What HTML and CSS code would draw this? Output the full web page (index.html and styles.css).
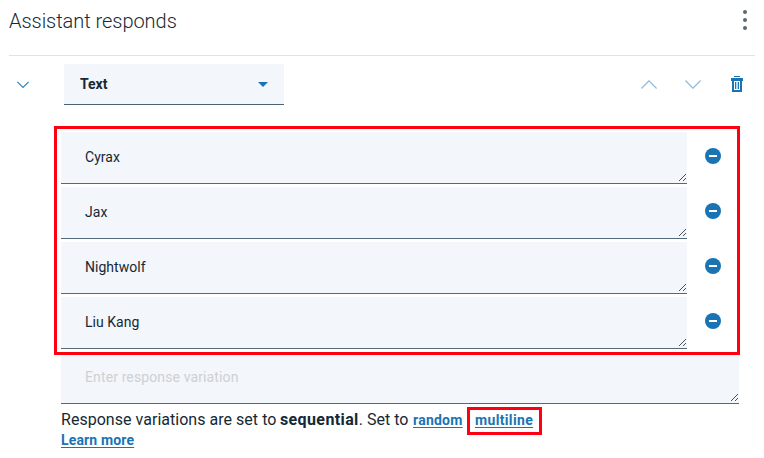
FILE: index.html
```html
<!DOCTYPE html>
<html lang="en">
<head>
<meta charset="utf-8">
<title>Assistant responds</title>
<link rel="stylesheet" href="styles.css">
</head>
<body>
<svg class="defs" width="0" height="0">
  <symbol id="grip" viewBox="0 0 8 8"><path d="M0 7h1v1H0zM1 6h1v1H1zM2 5h1v1H2zM3 4h1v1H3zM4 3h1v1H4zM5 2h1v1H5zM6 1h1v1H6zM4 7h1v1H4zM5 6h1v1H5zM6 5h1v1H6z" fill="#4b5055"/></symbol>
  <symbol id="minus" viewBox="0 0 16 16"><circle cx="8" cy="8" r="8" fill="#1a73b3"/><path d="M4 7h8v2H4z" fill="#fff"/></symbol>
</svg>
<main class="panel">
  <header class="header">
    <h1 class="title">Assistant responds</h1>
    <svg class="more" width="4" height="20" viewBox="0 0 4 20" fill="#5a6872"><circle cx="2" cy="2" r="2"/><circle cx="2" cy="10" r="2"/><circle cx="2" cy="18" r="2"/></svg>
  </header>
  <div class="toolbar">
    <svg class="collapse" width="12" height="8" viewBox="0 0 12 8"><path d="M.4.8 6 6.4 11.6.8" fill="none" stroke="#2a7fbc" stroke-width="1.1"/></svg>
    <div class="select"><span class="select-text">Text</span><svg width="10" height="5" viewBox="0 0 10 5"><path d="M0 0h10L5 5z" fill="#1a73b3"/></svg></div>
    <div class="actions">
      <svg width="16" height="9" viewBox="0 0 16 9"><path d="M.4 8.5 8 .8l7.6 7.7" fill="none" stroke="#8bbbdc" stroke-width="1.2"/></svg>
      <svg width="16" height="9" viewBox="0 0 16 9"><path d="M.4.5 8 8.2 15.6.5" fill="none" stroke="#8bbbdc" stroke-width="1.2"/></svg>
      <svg class="trash" width="12" height="16" viewBox="0 0 12 16" fill="#1a73b3"><path d="M3 0h6v1H3zM0 2h12v3h-1v11H1V5H0zM3 5v9h6V5z" fill-rule="evenodd"/><path d="M4 6h1.3v7H4zM6.7 6H8v7H6.7z"/></svg>
    </div>
  </div>
  <section class="responses">
    <div class="row"><div class="field"><span>Cyrax</span><svg class="grip"><use href="#grip"/></svg></div><svg class="minus"><use href="#minus"/></svg></div>
    <div class="row"><div class="field"><span>Jax</span><svg class="grip"><use href="#grip"/></svg></div><svg class="minus"><use href="#minus"/></svg></div>
    <div class="row"><div class="field"><span>Nightwolf</span><svg class="grip"><use href="#grip"/></svg></div><svg class="minus"><use href="#minus"/></svg></div>
    <div class="row"><div class="field"><span>Liu Kang</span><svg class="grip"><use href="#grip"/></svg></div><svg class="minus"><use href="#minus"/></svg></div>
  </section>
  <div class="field field-new"><span class="placeholder">Enter response variation</span><svg class="grip"><use href="#grip"/></svg></div>
  <footer class="footer">
    <div class="mode"><span class="lead">Response variations are set to</span><span class="seq"><b>sequential</b>.</span><span class="set">Set to</span><a class="link random">random</a><span class="callout"><a class="link multi">multiline</a></span></div>
    <a class="link learn">Learn more</a>
  </footer>
</main>
</body>
</html>
```

FILE: styles.css
```css
* { box-sizing: border-box; }
body { margin: 0; background: #fff; color: #152934; font-family: Roboto, "Liberation Sans", sans-serif; }
svg { display: block; flex: none; }
.defs { position: absolute; }
.panel { width: 764px; height: 458px; overflow: hidden; }
.header { height: 56px; margin: 0 9px; border-bottom: 1px solid #dfe3e6; display: flex; justify-content: space-between; padding: 9px 8px 0 0; }
.title { margin: 0; font-size: 20px; line-height: 24px; font-weight: 300; letter-spacing: -.04px; white-space: nowrap; }
.more { margin-top: 1px; }
.toolbar { display: flex; align-items: center; height: 41px; margin: 8px 21px 0 17px; }
.collapse { margin-right: 35px; }
.select { width: 220px; height: 41px; padding: 0 16px; background: #f3f6fa; border-bottom: 1px solid #4a6272; display: flex; align-items: center; justify-content: space-between; font-size: 14px; font-weight: 700; }
.actions { margin: -1px 0 0 auto; display: flex; align-items: center; gap: 28px; }
.trash { margin-left: 2px; }
.responses { width: 686px; height: 229px; margin: 21px 0 0 54px; padding: 3px 4px; border: 3px solid #ff0013; display: grid; align-content: start; gap: 3px; }
.row { display: flex; height: 52px; align-items: flex-start; }
.field { width: 626px; height: 52px; background: #f3f6fa; border-bottom: 1px solid #56687a; padding: 16px 0 2px 24px; display: flex; justify-content: space-between; font-size: 14px; line-height: 18px; letter-spacing: .03px; white-space: nowrap; }
.grip { width: 8px; height: 8px; align-self: flex-end; }
.minus { width: 16px; height: 16px; margin: 16px 0 0 18px; }
.field-new { width: 678px; height: 49px; margin-left: 61px; padding-top: 13px; }
.placeholder { color: #cdd1d4; letter-spacing: .12px; }
.footer { padding-left: 61px; font-size: 16px; }
.mode { display: flex; height: 28px; line-height: 31px; white-space: nowrap; }
.lead { width: 219px; letter-spacing: .03px; }
.seq { width: 87px; letter-spacing: .38px; }
.set { width: 46px; }
.link { color: #1a73b3; font-size: 14px; font-weight: 700; text-decoration: underline; text-underline-offset: 2px; text-decoration-thickness: 1px; }
.random { width: 54px; letter-spacing: .25px; line-height: 33px; }
.callout { width: 75px; height: 28px; margin-top: 3px; border: 3px solid #ff0013; padding-left: 5px; line-height: 20px; }
.multi { letter-spacing: .35px; }
.learn { display: block; line-height: 16px; letter-spacing: .15px; }
```
